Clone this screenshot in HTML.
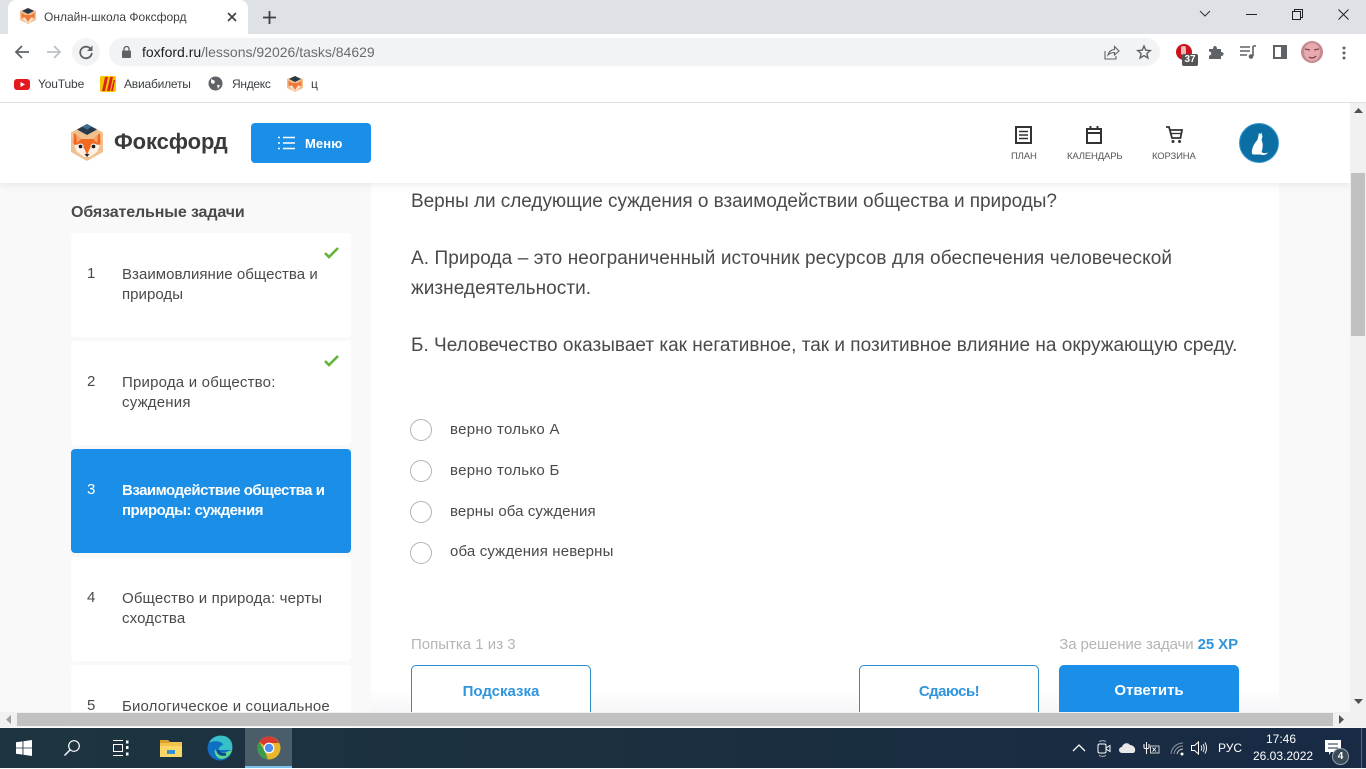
<!DOCTYPE html>
<html lang="ru">
<head>
<meta charset="utf-8">
<title>Онлайн-школа Фоксфорд</title>
<style>
html,body{margin:0;padding:0;width:1366px;height:768px;overflow:hidden;background:#f9f9fa;font-family:"Liberation Sans","Noto Sans CJK SC",sans-serif}
.a{position:absolute}
.t{position:absolute;white-space:nowrap}
svg{position:absolute;display:block;overflow:visible}
.card{position:absolute;left:71px;width:280px;background:#fff;border-radius:4px}
.n{position:absolute;left:87px;font-size:15px;color:#4a4a4a;white-space:nowrap}
.c{position:absolute;left:122px;font-size:15px;line-height:20px;color:#4a4a4a;white-space:nowrap}
.q{position:absolute;left:411px;font-size:19px;color:#4a4a4a;white-space:nowrap}
.r{position:absolute;left:410px;width:20px;height:20px;border:1px solid #b4b4b4;border-radius:50%;background:#fff}
.o{position:absolute;left:450px;font-size:15px;color:#4a4a4a;white-space:nowrap}
.btn{position:absolute;top:665px;width:178px;height:60px;border:1px solid #2a8fc9;border-radius:5px;background:#fff;color:#2f95dc;font-weight:bold;font-size:15px;text-align:center;line-height:50px}
.lab{position:absolute;top:151px;font-size:9.5px;color:#555;white-space:nowrap;letter-spacing:-.15px}
.bm{position:absolute;top:77px;font-size:12px;color:#3c4043;white-space:nowrap;letter-spacing:-.15px}
</style>
</head>
<body>
<!-- page -->
<div class="a" style="left:371px;top:183px;width:908px;height:529px;background:linear-gradient(#fff 0,#fff 507px,#f6f6f8 529px)"></div>
<div class="t" style="left:71px;top:204px;font-size:16px;font-weight:bold;color:#4a4a4a;letter-spacing:-.12px">Обязательные задачи</div>

<div class="card" style="top:233px;height:104px"></div>
<div class="n" style="top:265px">1</div>
<div class="c" style="top:265px;letter-spacing:.04px">Взаимовлияние общества и<br>природы</div>
<svg style="left:324px;top:247px" width="15" height="12" viewBox="0 0 15 12"><path d="M1 6l4 4 9-9" fill="none" stroke="#62b53a" stroke-width="2.6"/></svg>

<div class="card" style="top:341px;height:104px"></div>
<div class="n" style="top:373px">2</div>
<div class="c" style="top:373px;letter-spacing:.2px">Природа и общество:<br>суждения</div>
<svg style="left:324px;top:355px" width="15" height="12" viewBox="0 0 15 12"><path d="M1 6l4 4 9-9" fill="none" stroke="#62b53a" stroke-width="2.6"/></svg>

<div class="card" style="top:449px;height:104px;background:#1b8fe8"></div>
<div class="n" style="top:481px;color:#fff">3</div>
<div class="c" style="top:481px;color:#fff;font-weight:bold;letter-spacing:-.5px">Взаимодействие общества и<br>природы: суждения</div>

<div class="card" style="top:557px;height:104px"></div>
<div class="n" style="top:589px">4</div>
<div class="c" style="top:589px;letter-spacing:.15px">Общество и природа: черты<br>сходства</div>

<div class="card" style="top:665px;height:104px"></div>
<div class="n" style="top:697px">5</div>
<div class="c" style="top:697px;letter-spacing:.15px">Биологическое и социальное</div>

<div class="q" style="top:191px;letter-spacing:-.045px">Верны ли следующие суждения о взаимодействии общества и природы?</div>
<div class="q" style="top:248px;letter-spacing:.09px">А. Природа – это неограниченный источник ресурсов для обеспечения человеческой</div>
<div class="q" style="top:278px;letter-spacing:.05px">жизнедеятельности.</div>
<div class="q" style="top:335px;letter-spacing:.01px">Б. Человечество оказывает как негативное, так и позитивное влияние на окружающую среду.</div>

<div class="r" style="top:419px"></div><div class="o" style="top:421px;letter-spacing:.28px">верно только А</div>
<div class="r" style="top:460px"></div><div class="o" style="top:462px;letter-spacing:.28px">верно только Б</div>
<div class="r" style="top:501px"></div><div class="o" style="top:503px;letter-spacing:.1px">верны оба суждения</div>
<div class="r" style="top:542px"></div><div class="o" style="top:543px;letter-spacing:.15px">оба суждения неверны</div>

<div class="t" style="left:411px;top:636px;font-size:15px;color:#b5b5b5">Попытка 1 из 3</div>
<div class="t" style="right:128px;top:636px;font-size:15px;color:#b5b5b5;letter-spacing:-.1px">За решение задачи <b style="color:#2f95dc">25 XP</b></div>
<div class="btn" style="left:411px;line-height:51px">Подсказка</div>
<div class="btn" style="left:859px;line-height:51px;letter-spacing:-.5px">Сдаюсь!</div>
<div class="btn" style="left:1059px;width:180px;height:62px;border:0;background:#1b8fe8;color:#fff;line-height:51px">Ответить</div>

<!-- site header -->
<div class="a" style="left:0;top:103px;width:1350px;height:80px;background:#fff;box-shadow:0 2px 8px rgba(0,0,0,.08)"></div>
<svg style="left:70px;top:123px" width="34" height="40" viewBox="0 0 34 40">
<path d="M17 1L33 9.500V29L17 38L1 29V9.500Z" fill="#f0c08e"/>
<path d="M17 1L27 6.500L17 12L7 6.500Z" fill="#27394c"/>
<path d="M17 1L22 3.700L17 6.500L12 3.700Z" fill="#3f6f95"/>
<path d="M4 10L11 16H23L30 10L30.500 20L27 28L20 33H14L7 28L3.500 20Z" fill="#f26a21"/>
<path d="M6 12L11 16L7 20ZM28 12L23 16L27 20Z" fill="#f6a56c"/>
<path d="M4 22L11 21L15 27L17 33L19 27L23 21L30 22L27 29L20 34H14L7 29Z" fill="#fdf0e4"/>
<circle cx="10.500" cy="23.500" r="3" fill="#fff"/><circle cx="23.500" cy="23.500" r="3" fill="#fff"/>
<circle cx="10.500" cy="23.500" r="1.900" fill="#1e1e1e"/><circle cx="23.500" cy="23.500" r="1.900" fill="#1e1e1e"/>
<path d="M14.500 31H19.500L17 34Z" fill="#222"/>
</svg>
<div class="t" style="left:114px;top:129px;font-size:22px;font-weight:bold;color:#3a3a3a;letter-spacing:-.1px">Фоксфорд</div>
<div class="a" style="left:251px;top:123px;width:120px;height:40px;background:#1b8fe8;border-radius:4px"></div>
<svg style="left:278px;top:136px" width="18" height="14" viewBox="0 0 18 14"><path d="M5 1.500H17M5 7H17M5 12.500H17" stroke="#fff" stroke-width="1.500"/><path d="M0 1.500H2M0 7H2M0 12.500H2" stroke="#fff" stroke-width="1.500"/></svg>
<div class="t" style="left:305px;top:136px;font-size:13px;font-weight:bold;color:#fff;letter-spacing:.1px">Меню</div>

<svg style="left:1015px;top:126px" width="17" height="18" viewBox="0 0 17 18"><rect x="1" y="1" width="15" height="16" fill="none" stroke="#333" stroke-width="2"/><path d="M4 5.500H13M4 9H13M4 12.500H13" stroke="#333" stroke-width="1.500"/></svg>
<div class="lab" style="left:1011px">ПЛАН</div>
<svg style="left:1086px;top:126px" width="16" height="18" viewBox="0 0 16 18"><rect x="1" y="3" width="14" height="14" fill="none" stroke="#333" stroke-width="2"/><path d="M1 7H15" stroke="#333" stroke-width="2"/><path d="M4.500 0V3M11.500 0V3" stroke="#333" stroke-width="2"/></svg>
<div class="lab" style="left:1067px">КАЛЕНДАРЬ</div>
<svg style="left:1166px;top:126px" width="17" height="18" viewBox="0 0 17 18"><path d="M0 1H3L6 12H14.500L16 4H4" fill="none" stroke="#333" stroke-width="1.800"/><path d="M5 7.500H15" stroke="#333" stroke-width="1.300"/><circle cx="7" cy="15.500" r="1.500" fill="#333"/><circle cx="13.500" cy="15.500" r="1.500" fill="#333"/></svg>
<div class="lab" style="left:1152px">КОРЗИНА</div>
<svg style="left:1239px;top:123px" width="40" height="40" viewBox="0 0 40 40"><circle cx="20" cy="20" r="19.500" fill="#0b6fa4" stroke="#3a97cf" stroke-width="1"/><path d="M20 9.500L21 11.500L22.500 9.500L23.500 14L22.500 16.500C24 20 24 24 23 27.500L22.500 29C24 30.500 26.500 30.500 29 29.500C27.500 32 24 32.500 21.500 31.500H14.500C13 31.500 12.500 30 13 27.500C13.500 24 15.500 20 18 17.500C19 15.500 19.500 12.500 20 9.500Z" fill="#fff"/></svg>

<!-- scrollbars -->
<div class="a" style="left:1350px;top:103px;width:16px;height:609px;background:#f1f1f1"></div>
<div class="a" style="left:1351px;top:173px;width:14px;height:163px;background:#c1c1c1"></div>
<svg style="left:1354px;top:108px" width="9" height="5"><path d="M0 5L4.500 0L9 5Z" fill="#505050"/></svg>
<svg style="left:1354px;top:699px" width="9" height="5"><path d="M0 0L4.500 5L9 0Z" fill="#505050"/></svg>
<div class="a" style="left:0;top:712px;width:1366px;height:15px;background:#f1f1f1"></div>
<div class="a" style="left:17px;top:713px;width:1316px;height:13px;background:#c1c1c1"></div>
<svg style="left:6px;top:715px" width="5" height="9"><path d="M5 0L0 4.500L5 9Z" fill="#a0a0a0"/></svg>
<svg style="left:1339px;top:715px" width="5" height="9"><path d="M0 0L5 4.500L0 9Z" fill="#505050"/></svg>

<!-- chrome -->
<div class="a" style="left:0;top:0;width:1366px;height:34px;background:#dee1e6"></div>
<div class="a" style="left:0;top:34px;width:1366px;height:36px;background:#fff"></div>
<div class="a" style="left:0;top:70px;width:1366px;height:33px;background:#fff;border-bottom:1px solid #e0e0e0;box-sizing:border-box"></div>
<div class="a" style="left:8px;top:0;width:240px;height:34px;background:#fff;border-radius:8px 8px 0 0"></div>
<svg style="left:20px;top:8px" width="16" height="16" viewBox="0 0 16 16"><path d="M8 0L16 3V12L8 16L0 12V3Z" fill="#f0c08e"/><path d="M2 3L8 0L14 3L8 6Z" fill="#26384a"/><path d="M1.500 4.500L5 7H11L14.500 4.500V10L10 14H6L1.500 10Z" fill="#f0793a"/><path d="M2 10L5 9.500L8 14L11 9.500L14 10L10 14.500H6Z" fill="#fde3cf"/></svg>
<div class="t" style="left:44px;top:10px;font-size:12px;color:#3c4043">Онлайн-школа Фоксфорд</div>
<svg style="left:227px;top:12px" width="10" height="10"><path d="M1 1L9 9M9 1L1 9" stroke="#3c4043" stroke-width="1.600"/></svg>
<svg style="left:263px;top:11px" width="13" height="13"><path d="M6.500 0V13M0 6.500H13" stroke="#3c4043" stroke-width="1.800"/></svg>
<svg style="left:1199px;top:10px" width="12" height="8"><path d="M1 1L6 6L11 1" fill="none" stroke="#333" stroke-width="1"/></svg>
<svg style="left:1246px;top:14px" width="11" height="2"><path d="M0 .5H11" stroke="#222" stroke-width="1"/></svg>
<svg style="left:1292px;top:9px" width="11" height="11"><path d="M.5 2.500H8.500V10.500H.5ZM2.500 2.500V.5H10.500V8.500H8.500" fill="none" stroke="#222"/></svg>
<svg style="left:1338px;top:9px" width="11" height="11"><path d="M.5 .5L10.500 10.500M10.500 .5L.5 10.500" stroke="#222" stroke-width="1"/></svg>

<svg style="left:14px;top:44px" width="16" height="16" viewBox="0 0 16 16"><path d="M15 8H2M8 2L2 8L8 14" fill="none" stroke="#5f6368" stroke-width="1.800"/></svg>
<svg style="left:46px;top:44px" width="16" height="16" viewBox="0 0 16 16"><path d="M1 8H14M8 2L14 8L8 14" fill="none" stroke="#bdc1c6" stroke-width="1.800"/></svg>
<div class="a" style="left:72px;top:38px;width:28px;height:28px;border-radius:50%;background:#f1f3f4"></div>
<svg style="left:79px;top:45px" width="14" height="14" viewBox="0 0 14 14"><path d="M12 4.500A5.800 5.800 0 1 0 12.800 8" fill="none" stroke="#5f6368" stroke-width="1.800"/><path d="M13.500 .5V6H8Z" fill="#5f6368"/></svg>
<div class="a" style="left:109px;top:38px;width:1051px;height:28px;border-radius:14px;background:#f1f3f4"></div>
<svg style="left:122px;top:46px" width="9" height="12" viewBox="0 0 9 12"><rect x="0" y="4.500" width="9" height="7.500" rx="1" fill="#5f6368"/><path d="M2 5V3a2.500 2.500 0 0 1 5 0V5" fill="none" stroke="#5f6368" stroke-width="1.300"/></svg>
<div class="t" style="left:142px;top:44px;font-size:14px;color:#6a6d70"><span style="color:#202124">foxford.ru</span>/lessons/92026/tasks/84629</div>
<svg style="left:1104px;top:45px" width="16" height="15" viewBox="0 0 16 15"><path d="M1 6V14H12V11" fill="none" stroke="#5f6368" stroke-width="1.100"/><path d="M4 10C5 6 8 4.500 10.500 4.500V1.500L15 6L10.500 10V7.500C8 7.500 6 8 4 10Z" fill="none" stroke="#5f6368" stroke-width="1.100"/></svg>
<svg style="left:1137px;top:45px" width="14" height="14" viewBox="0 0 14 14"><path d="M7 1L8.800 5.200L13.300 5.600L9.900 8.500L10.900 13L7 10.600L3.100 13L4.100 8.500L.7 5.600L5.200 5.200Z" fill="none" stroke="#5f6368" stroke-width="1.400"/></svg>
<div class="a" style="left:1176px;top:44px;width:16px;height:16px;border-radius:50%;background:#c8141c"></div>
<div class="a" style="left:1181px;top:46px;width:5px;height:9px;background:#f0b8b8;border-radius:2px"></div>
<div class="a" style="left:1182px;top:54px;width:16px;height:12px;background:#555;border-radius:2px;color:#fff;font-size:10px;font-weight:bold;line-height:12px;text-align:center">37</div>
<svg style="left:1209px;top:45px" width="15" height="14" viewBox="0 0 15 14"><path d="M0 4H4C4 0 8 0 8 4H12V7C15.500 7 15.500 11 12 11V14H0V10.500C3 10.500 3 6.500 0 6.500Z" fill="#5f6368"/></svg>
<svg style="left:1240px;top:45px" width="16" height="14" viewBox="0 0 16 14"><path d="M0 2H10M0 6H10M0 10H7" stroke="#5f6368" stroke-width="1.500"/><path d="M13 1H16M13 1V11" fill="none" stroke="#5f6368" stroke-width="1.600"/><circle cx="11" cy="11.500" r="2.300" fill="#5f6368"/></svg>
<svg style="left:1273px;top:45px" width="14" height="14" viewBox="0 0 14 14"><rect x="1" y="1" width="12" height="12" fill="none" stroke="#5f6368" stroke-width="2"/><rect x="8" y="1" width="5" height="12" fill="#5f6368"/></svg>
<svg style="left:1301px;top:41px" width="22" height="22" viewBox="0 0 22 22"><circle cx="11" cy="11" r="11" fill="#c58a90"/><ellipse cx="11" cy="11" rx="8" ry="9" fill="#e8a9b0"/><path d="M4 8L9 9M13 9L18 8" stroke="#7a4a50" stroke-width="1.200"/><path d="M8 16C10 17.500 13 17.500 15 15" fill="none" stroke="#7a3a44" stroke-width="1.200"/></svg>
<svg style="left:1342px;top:46px" width="4" height="14"><circle cx="2" cy="2" r="1.500" fill="#5f6368"/><circle cx="2" cy="7" r="1.500" fill="#5f6368"/><circle cx="2" cy="12" r="1.500" fill="#5f6368"/></svg>

<!-- bookmarks -->
<svg style="left:14px;top:79px" width="16" height="11" viewBox="0 0 16 11"><rect width="16" height="11" rx="3" fill="#e5181e"/><path d="M6.500 3L11 5.500L6.500 8Z" fill="#fff"/></svg>
<div class="bm" style="left:38px">YouTube</div>
<svg style="left:100px;top:76px" width="16" height="16" viewBox="0 0 16 16"><rect width="16" height="16" rx="2" fill="#f7c600"/><path d="M5 1H8L5 15H2ZM10 1H13L10 15H7ZM13.500 4H15L13 15H11Z" fill="#d9261c"/></svg>
<div class="bm" style="left:124px;letter-spacing:-.2px">Авиабилеты</div>
<svg style="left:208px;top:76px" width="15" height="15" viewBox="0 0 15 15"><circle cx="7.500" cy="7.500" r="7" fill="#5f6368"/><path d="M3 3L7 5L6 8L3 7ZM9 9L12 9L10 13Z" fill="#fff"/></svg>
<div class="bm" style="left:232px;letter-spacing:-.3px">Яндекс</div>
<svg style="left:287px;top:76px" width="16" height="16" viewBox="0 0 16 16"><path d="M8 0L16 3V12L8 16L0 12V3Z" fill="#f0c08e"/><path d="M2 3L8 0L14 3L8 6Z" fill="#26384a"/><path d="M1.500 4.500L5 7H11L14.500 4.500V10L10 14H6L1.500 10Z" fill="#f0793a"/><path d="M2 10L5 9.500L8 14L11 9.500L14 10L10 14.500H6Z" fill="#fde3cf"/></svg>
<div class="bm" style="left:311px">ц</div>

<!-- taskbar -->
<div class="a" style="left:0;top:728px;width:1366px;height:40px;background:linear-gradient(90deg,#1e3440 0,#1c3040 40%,#182a44 100%)"></div>
<div class="a" style="left:245px;top:728px;width:47px;height:40px;background:#4a5e6a;border-bottom:2px solid #7cc0ee;box-sizing:border-box"></div>
<svg style="left:16px;top:740px" width="16" height="16" viewBox="0 0 16 16"><path d="M0 2.300L6.500 1.400V7.600H0ZM7.400 1.300L16 0V7.600H7.400ZM0 8.400H6.500V14.600L0 13.700ZM7.400 8.400H16V16L7.400 14.700Z" fill="#fff"/></svg>
<svg style="left:64px;top:740px" width="16" height="16" viewBox="0 0 16 16"><circle cx="10" cy="6" r="5.300" fill="none" stroke="#fff" stroke-width="1.200"/><path d="M6 10L.5 15.500" stroke="#fff" stroke-width="1.400"/></svg>
<svg style="left:112px;top:740px" width="17" height="16" viewBox="0 0 17 16"><path d="M1 .5H11M1 15.500H11" stroke="#fff"/><rect x="1.500" y="4.500" width="9" height="7" fill="none" stroke="#fff"/><path d="M14 .5H16.500V3.500H14ZM14 6H16.500V9H14ZM14 12.500H16.500V15.500H14Z" fill="#fff"/></svg>
<svg style="left:160px;top:739px" width="22" height="18" viewBox="0 0 22 18"><path d="M0 1H8L10 3H22V18H0Z" fill="#f3c24c"/><path d="M0 1H8L10 4H0Z" fill="#d9a22c"/><rect x="0" y="7" width="22" height="11" fill="#fbd768"/><rect x="7" y="11" width="8" height="4" fill="#3a8fd4"/></svg>
<svg style="left:207px;top:735px" width="26" height="26" viewBox="0 0 26 26"><circle cx="13" cy="13" r="12.500" fill="#0f6fc0"/><path d="M2 8C5 1 14-1 20 2C25 5 26 10 25 15H12C11 11 16 11 16 9C14 6 6 5 2 8Z" fill="#38c0c8"/><path d="M25 15C24 20 19 24 14 24C9 23 7 18 8 14C10 18 15 19 25 15Z" fill="#60d890"/><path d="M11 15C11 19 15 20 19 19" fill="none" stroke="#0a4d90" stroke-width="3"/></svg>
<svg style="left:257px;top:736px" width="24" height="24" viewBox="0 0 24 24"><circle cx="12" cy="12" r="11.500" fill="#e8b62c"/><path d="M12 .5A11.500 11.500 0 0 1 22 7H12A5 5 0 0 0 7.500 9.800L2.200 6A11.500 11.500 0 0 1 12 .5Z" fill="#d93a2f"/><path d="M2.200 6L7.500 14.500L11 23.400A11.500 11.500 0 0 1 2.200 6Z" fill="#3a9c4a"/><circle cx="12" cy="12" r="5.400" fill="#fff"/><circle cx="12" cy="12" r="4.200" fill="#4f8ef0"/></svg>

<svg style="left:1072px;top:743px" width="14" height="9"><path d="M1 8L7 2L13 8" fill="none" stroke="#fff" stroke-width="1.300"/></svg>
<svg style="left:1097px;top:740px" width="14" height="17" viewBox="0 0 14 17"><rect x="1" y="4" width="8" height="9" rx="1.500" fill="none" stroke="#fff"/><path d="M9 8L13 5.500V11.500L9 9" fill="none" stroke="#fff"/><path d="M2 1.500C4 .5 7 .5 9 1.500M2 15.500C4 16.500 7 16.500 9 15.500" fill="none" stroke="#ccc" stroke-width=".9"/></svg>
<svg style="left:1119px;top:742px" width="17" height="11" viewBox="0 0 17 11"><path d="M3 11A3 3 0 0 1 3 5C4 1 9 0 11 3C14 3 17 6 16 9C16 10 15 11 14 11Z" fill="#e8e8e8"/></svg>
<svg style="left:1143px;top:741px" width="17" height="14" viewBox="0 0 17 14"><path d="M3.500 1V13M1 3V6.500C1 8 6 8 6 6.500V3" fill="none" stroke="#fff"/><rect x="7.500" y="5" width="8.500" height="7" fill="none" stroke="#ccc"/><path d="M9.500 6.500L13 10.500M13 6.500L9.500 10.500" stroke="#fff" stroke-width=".9"/></svg>
<svg style="left:1170px;top:742px" width="15" height="14" viewBox="0 0 15 14"><path d="M1 12A12 12 0 0 1 13 1M4 12A9 9 0 0 1 13 4" fill="none" stroke="#8a97a0"/><path d="M7 12A6 6 0 0 1 13 7" fill="none" stroke="#ccc"/><circle cx="12" cy="12" r="1.500" fill="#fff"/></svg>
<svg style="left:1191px;top:741px" width="16" height="14" viewBox="0 0 16 14"><path d="M.5 4.500H3.500L7.500 1V13L3.500 9.500H.5Z" fill="none" stroke="#fff"/><path d="M10 4.500C11 6 11 8 10 9.500M12 3C13.500 5.500 13.500 8.500 12 11M14 1.500C16 5 16 9 14 12.500" fill="none" stroke="#fff" stroke-width=".9"/></svg>
<div class="t" style="left:1218px;top:741px;font-size:12px;color:#fff">РУС</div>
<div class="t" style="left:1266px;top:732px;font-size:12px;color:#fff">17:46</div>
<div class="t" style="left:1253px;top:749px;font-size:12px;color:#fff">26.03.2022</div>
<svg style="left:1325px;top:740px" width="19" height="16" viewBox="0 0 19 16"><path d="M0 0H16V12H6L4 15V12H0Z" fill="#fff"/><path d="M3 4H13M3 8H13" stroke="#1c2e44"/></svg>
<div class="a" style="left:1332px;top:748px;width:15px;height:15px;border-radius:50%;background:#3a4a58;border:1px solid #9aa5ad;color:#fff;font-size:10px;font-weight:bold;line-height:15px;text-align:center">4</div>
<div class="a" style="left:1361px;top:728px;width:1px;height:40px;background:#55677a"></div>
</body>
</html>
